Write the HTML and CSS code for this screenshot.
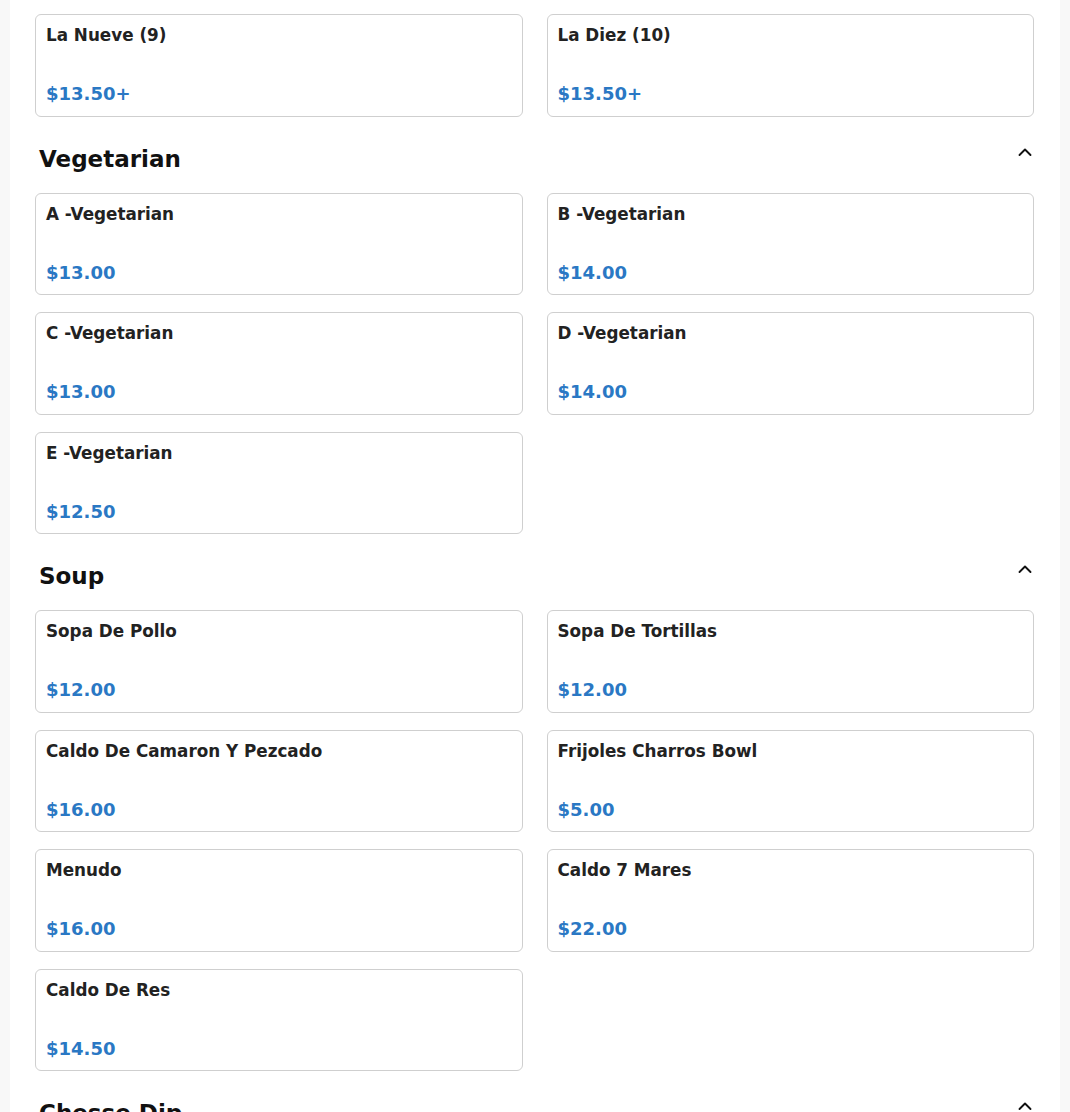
FILE: index.html
```html
<!DOCTYPE html>
<html>
<head>
<meta charset="utf-8">
<link rel="stylesheet" href="styles.css">
</head>
<body>
<div class="page">
  <div class="grid first">
    <div class="card"><div class="name">La Nueve (9)</div><div class="price">$13.50+</div></div>
    <div class="card"><div class="name">La Diez (10)</div><div class="price">$13.50+</div></div>
  </div>

  <section class="section">
    <div class="head"><h2>Vegetarian</h2><svg class="chev" viewBox="0 0 16 16" width="16" height="16"><polyline points="2.5,11 8,5.5 13.5,11" fill="none" stroke="#111" stroke-width="1.9" stroke-linecap="round" stroke-linejoin="round"/></svg></div>
    <div class="grid">
      <div class="card"><div class="name">A -Vegetarian</div><div class="price">$13.00</div></div>
      <div class="card"><div class="name">B -Vegetarian</div><div class="price">$14.00</div></div>
      <div class="card"><div class="name">C -Vegetarian</div><div class="price">$13.00</div></div>
      <div class="card"><div class="name">D -Vegetarian</div><div class="price">$14.00</div></div>
      <div class="card"><div class="name">E -Vegetarian</div><div class="price">$12.50</div></div>
    </div>
  </section>

  <section class="section">
    <div class="head"><h2>Soup</h2><svg class="chev" viewBox="0 0 16 16" width="16" height="16"><polyline points="2.5,11 8,5.5 13.5,11" fill="none" stroke="#111" stroke-width="1.9" stroke-linecap="round" stroke-linejoin="round"/></svg></div>
    <div class="grid">
      <div class="card"><div class="name">Sopa De Pollo</div><div class="price">$12.00</div></div>
      <div class="card"><div class="name">Sopa De Tortillas</div><div class="price">$12.00</div></div>
      <div class="card"><div class="name">Caldo De Camaron Y Pezcado</div><div class="price">$16.00</div></div>
      <div class="card"><div class="name">Frijoles Charros Bowl</div><div class="price">$5.00</div></div>
      <div class="card"><div class="name">Menudo</div><div class="price">$16.00</div></div>
      <div class="card"><div class="name">Caldo 7 Mares</div><div class="price">$22.00</div></div>
      <div class="card"><div class="name">Caldo De Res</div><div class="price">$14.50</div></div>
    </div>
  </section>

  <section class="section">
    <div class="head"><h2>Chesse Dip</h2><svg class="chev" viewBox="0 0 16 16" width="16" height="16"><polyline points="2.5,11 8,5.5 13.5,11" fill="none" stroke="#111" stroke-width="1.9" stroke-linecap="round" stroke-linejoin="round"/></svg></div>
  </section>
</div>
</body>
</html>
```

FILE: styles.css
```css
html, body {
  margin: 0;
  padding: 0;
  background: #f8f8f8;
  font-family: "DejaVu Sans", "Liberation Sans", sans-serif;
}
.page {
  margin: 0 10px;
  background: #fff;
  padding: 14px 26px 0 25px;
  min-height: 1112px;
  box-sizing: border-box;
  height: 1112px;
  overflow: hidden;
}
.grid {
  display: grid;
  grid-template-columns: 1fr 1fr;
  column-gap: 24px;
  row-gap: 17px;
}
.card {
  border: 1px solid #cfcfcf;
  border-radius: 6px;
  padding: 11px 10px 11.5px 10px;
  display: flex;
  flex-direction: column;
  gap: 38px;
  background: #fff;
}
.name {
  font-size: 16.8px;
  font-weight: bold;
  color: #222;
  line-height: 19px;
}
.price {
  font-size: 18px;
  font-weight: bold;
  color: #2a78c4;
  line-height: 21px;
}
.section {
  margin-top: 29px;
}
.head {
  display: flex;
  justify-content: space-between;
  align-items: flex-start;
  padding-left: 4px;
  margin-bottom: 21px;
}
.head h2 {
  margin: 0;
  font-size: 23px;
  line-height: 26px;
  font-weight: bold;
  color: #111;
}
.chev {
  display: block;
  margin-top: -2px;
  margin-right: 1px;
}
```
